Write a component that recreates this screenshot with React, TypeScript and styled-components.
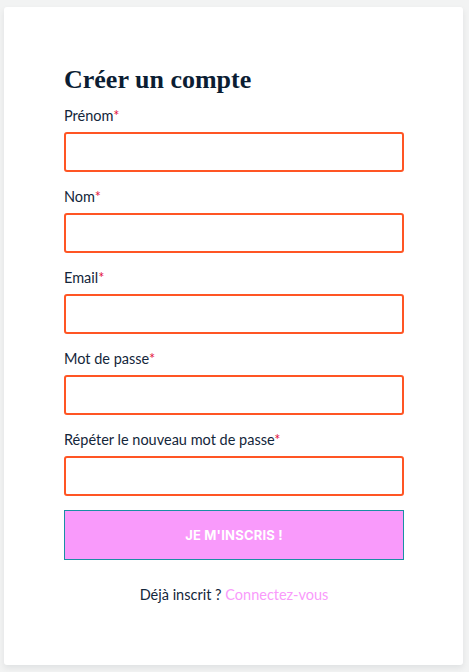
import React from "react";
import styled, { createGlobalStyle } from "styled-components";

const Global = createGlobalStyle`
  html, body { margin: 0; padding: 0; background: #f2f3f3; }
  body { font-family: Lato, "Liberation Sans", sans-serif; }
  * { box-sizing: border-box; }
`;

const Page = styled.div`
  padding: 7px 6px 0 4px;
  height: 672px;
`;

const Card = styled.div`
  background: #ffffff;
  border-radius: 3px;
  height: 658px;
  padding: 58px 59px 0 60px;
  box-shadow: 0 3px 6px rgba(0, 20, 40, 0.08);
  display: flex;
  flex-direction: column;
`;

const Title = styled.h1`
  margin: 0 0 9px;
  font-family: "Liberation Serif", "DejaVu Serif", serif;
  font-weight: 700;
  font-size: 26px;
  line-height: 30px;
  color: #0b1d33;
`;

const Field = styled.div`
  display: flex;
  flex-direction: column;
  margin-bottom: 13px;
  &:last-of-type { margin-bottom: 14px; }
`;

const Label = styled.label`
  font-size: 14.5px;
  line-height: 20px;
  padding-top: 2px;
  color: #13263a;
  margin-bottom: 6px;
`;

const Star = styled.span`
  color: #e3143f;
`;

const Input = styled.input`
  height: 40px;
  width: 100%;
  border: 2px solid #ff5524;
  border-radius: 3px;
  background: #fff;
  outline: none;
  font: inherit;
  padding: 0 10px;
`;

const Button = styled.button`
  height: 50px;
  width: 100%;
  background: #f99afb;
  border: 1px solid #1a8fa4;
  color: #ffffff;
  font-family: Inter, "Liberation Sans", sans-serif;
  font-weight: 700;
  font-size: 13px;
  letter-spacing: 0.2px;
  cursor: pointer;
`;

const Footer = styled.p`
  margin: 25px 0 0;
  text-align: center;
  font-size: 14.5px;
  line-height: 20px;
  color: #13263a;
`;

const Link = styled.a`
  color: #f99afb;
  text-decoration: none;
`;

const fields = [
  { id: "prenom", label: "Prénom", type: "text" },
  { id: "nom", label: "Nom", type: "text" },
  { id: "email", label: "Email", type: "email" },
  { id: "password", label: "Mot de passe", type: "password" },
  { id: "password2", label: "Répéter le nouveau mot de passe", type: "password" },
];

export default function App() {
  return (
    <Page>
      <Global />
      <Card>
        <Title>Créer un compte</Title>
        <form onSubmit={(e) => e.preventDefault()}>
          {fields.map((f) => (
            <Field key={f.id}>
              <Label htmlFor={f.id}>
                {f.label}
                <Star>*</Star>
              </Label>
              <Input id={f.id} type={f.type} />
            </Field>
          ))}
          <Button type="submit">JE M'INSCRIS !</Button>
        </form>
        <Footer>
          Déjà inscrit ? <Link href="#">Connectez-vous</Link>
        </Footer>
      </Card>
    </Page>
  );
}
